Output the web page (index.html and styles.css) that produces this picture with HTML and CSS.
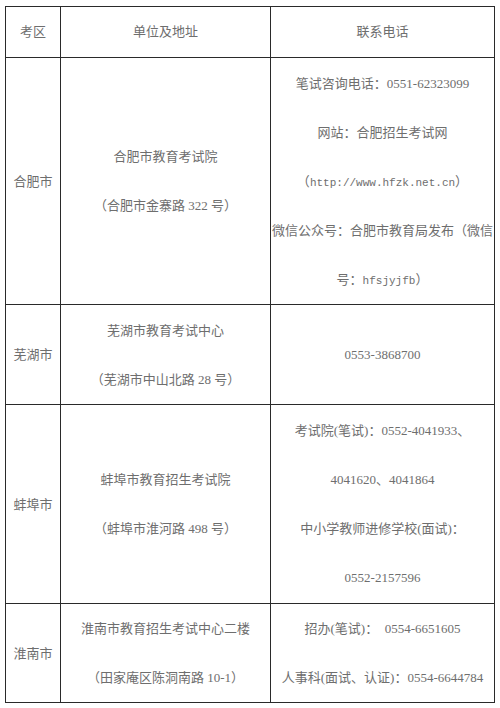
FILE: index.html
```html
<!DOCTYPE html>
<html lang="zh-CN">
<head>
<meta charset="utf-8">
<link rel="stylesheet" href="styles.css">
</head>
<body>
<table class="info">
  <colgroup>
    <col class="c1">
    <col class="c2">
    <col class="c3">
  </colgroup>
  <tr class="r-head">
    <td>考区</td>
    <td>单位及地址</td>
    <td>联系电话</td>
  </tr>
  <tr class="r-1">
    <td>合肥市</td>
    <td>合肥市教育考试院<br>（合肥市金寨路 322 号）</td>
    <td>笔试咨询电话：0551-62323099<br>网站：合肥招生考试网<br>（<span class="mono">http://www.hfzk.net.cn</span>）<br>微信公众号：合肥市教育局发布（微信<br>号：<span class="mono">hfsjyjfb</span>）</td>
  </tr>
  <tr class="r-2">
    <td>芜湖市</td>
    <td>芜湖市教育考试中心<br>（芜湖市中山北路 28 号）</td>
    <td>0553-3868700</td>
  </tr>
  <tr class="r-3">
    <td>蚌埠市</td>
    <td>蚌埠市教育招生考试院<br>（蚌埠市淮河路 498 号）</td>
    <td>考试院(笔试)：0552-4041933、<br>4041620、4041864<br>中小学教师进修学校(面试)：<br>0552-2157596</td>
  </tr>
  <tr class="r-4">
    <td>淮南市</td>
    <td>淮南市教育招生考试中心二楼<br>（田家庵区陈洞南路 10-1）</td>
    <td>招办(笔试)：&nbsp; 0554-6651605<br>人事科(面试、认证)：0554-6644784</td>
  </tr>
</table>
</body>
</html>
```
FILE: styles.css
```css
html, body {
  margin: 0;
  padding: 0;
  background: #ffffff;
}

body {
  padding: 6px 0 0 5px;
  font-family: "Liberation Serif", "Noto Sans CJK SC", serif;
  font-size: 13px;
  color: #6e6e6e;
}

.info {
  border-collapse: collapse;
  table-layout: fixed;
  width: 489px;
}

.c1 { width: 55px; }
.c2 { width: 210px; }
.c3 { width: 224px; }

.info td {
  border: 1.5px solid #2a2a2a;
  padding: 0;
  text-align: center;
  vertical-align: middle;
  line-height: 49px;
  white-space: nowrap;
  overflow: hidden;
}

.r-head td { height: 50px; line-height: 50px; }
.r-1 td { height: 246px; }
.r-2 td { height: 99px; }
.r-3 td { height: 198px; }
.r-4 td { height: 97px; }

.mono {
  font-family: "Liberation Mono", monospace;
  font-size: 11px;
  line-height: 1;
}
```
